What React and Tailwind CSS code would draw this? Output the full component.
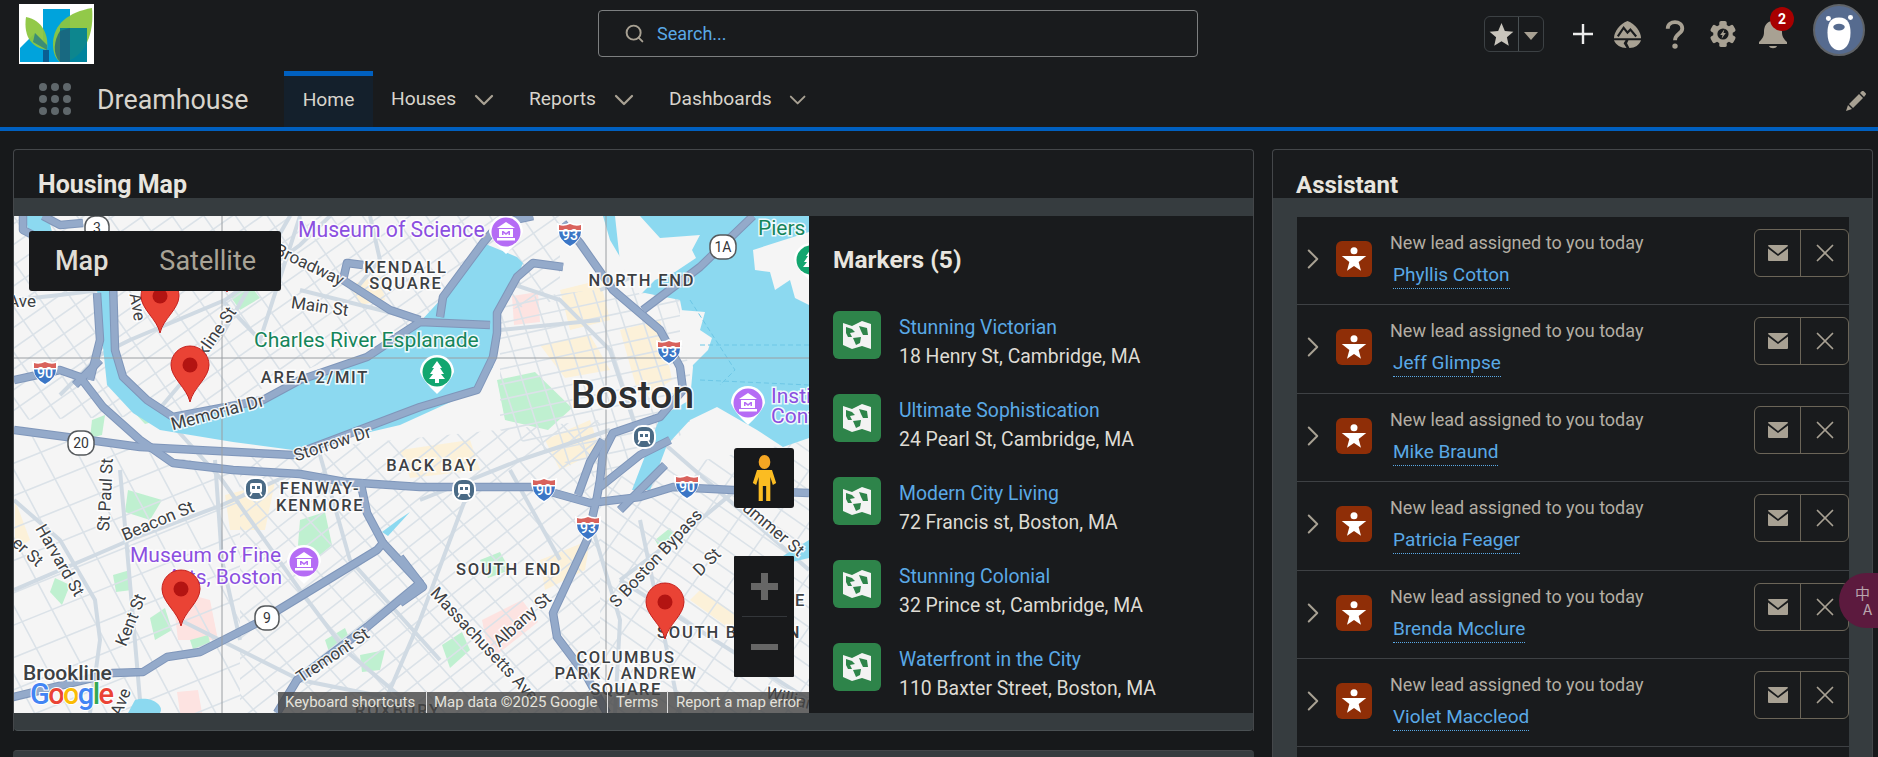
import { ChevronDown, ChevronRight, Search, X } from 'lucide-react'

const navItems = [
  { label: 'Houses', cls: 'w-[138px]' },
  { label: 'Reports', cls: 'w-[140px]' },
  { label: 'Dashboards', cls: 'w-[160px]' },
]

const markers = [
  { name: 'Stunning Victorian', address: '18 Henry St, Cambridge, MA' },
  { name: 'Ultimate Sophistication', address: '24 Pearl St, Cambridge, MA' },
  { name: 'Modern City Living', address: '72 Francis st, Boston, MA' },
  { name: 'Stunning Colonial', address: '32 Prince st, Cambridge, MA' },
  { name: 'Waterfront in the City', address: '110 Baxter Street, Boston, MA' },
]

const leads = ['Phyllis Cotton', 'Jeff Glimpse', 'Mike Braund', 'Patricia Feager', 'Brenda Mcclure', 'Violet Maccleod']

// ---- map data, in page pixels (the svg viewBox is offset to match) ----
const water = [
  'M25 216 L48 216 L52 232 L30 238 Z',
  'M97 290 L113 290 L115 350 L123 377 L147 400 L173 417 L263 400 L300 380 L367 357 L420 322 L443 297 L483 243 L517 257 L523 263 L517 277 L497 313 L497 333 L493 367 L477 390 L400 425 L293 450 L233 442 L160 430 L133 413 L107 385 Z',
  'M603 216 L809 216 L809 438 L783 447 L757 430 L717 407 L690 420 L667 445 L650 490 L632 490 L660 417 L690 400 L693 367 L680 300 L640 292 L623 262 L610 240 Z',
  'M783 556 L809 540 L809 558 L792 562 Z',
  'M135 700 C150 695 165 705 160 713 L128 713 Z',
  'M398 520 L410 512 L388 536 L382 532 Z',
]
const land = [
  'M615 216 L640 216 L660 238 L700 235 L692 250 L696 258 L675 272 L655 280 L640 295 L620 262 Z',
  'M753 250 L809 232 L809 305 L795 298 L790 280 L775 290 L770 272 L755 270 Z',
  'M680 310 L705 312 L700 330 L712 338 L708 350 L690 368 L680 340 Z',
]
const parks = [
  'M497 380 L535 372 L572 408 L548 430 L505 420 Z',
  'M110 372 L128 392 L160 420 L145 424 L118 395 Z',
  'M300 520 L325 512 L332 545 L312 562 L298 545 Z',
  'M230 296 L250 285 L260 298 L240 310 Z',
  'M92 420 L105 415 L102 435 L90 438 Z',
  'M385 408 L415 395 L420 405 L390 420 Z',
  'M128 490 L162 500 L150 520 L125 512 Z',
  'M113 575 L130 570 L132 590 L116 592 Z',
  'M150 618 L165 608 L172 630 L155 640 Z',
  'M55 578 L70 585 L62 605 L50 592 Z',
  'M190 640 L208 635 L212 650 L195 655 Z',
  'M480 560 L500 552 L510 570 L488 578 Z',
  'M442 645 L462 632 L470 650 L450 668 Z',
  'M655 540 L670 528 L678 540 L662 552 Z',
  'M325 640 L345 628 L350 640 L330 655 Z',
  'M360 655 L385 650 L380 670 L362 672 Z',
]
const pinks = [
  'M512 296 L538 292 L540 322 L514 325 Z',
  'M172 590 L210 600 L218 640 L178 640 Z',
  'M482 620 L522 600 L538 622 L490 660 Z',
  'M177 692 L198 690 L202 713 L180 713 Z',
]
const pales = [
  'M560 290 L600 280 L610 320 L570 330 Z',
  'M620 330 L660 320 L672 380 L640 400 Z',
  'M540 345 L590 335 L610 370 L565 378 Z',
  'M545 440 L590 420 L600 450 L560 470 Z',
  'M400 450 L470 440 L480 470 L410 478 Z',
  'M225 495 L275 482 L265 530 L230 530 Z',
  'M700 590 L790 650 L780 665 L690 600 Z',
  'M540 560 L590 540 L585 570 L545 590 Z',
  'M350 285 L380 275 L385 300 L360 305 Z',
  'M15 500 L30 540 L15 550 Z',
]
const meshes = [
  { id: 'm1', pts: '14,216 560,216 560,300 400,330 200,415 14,420', angle: -35, step: 17 },
  { id: 'm2', pts: '14,216 560,216 560,300 400,330 200,415 14,420', angle: 55, step: 26 },
  { id: 'm3', pts: '14,425 240,470 240,713 14,713', angle: -22, step: 30 },
  { id: 'm4', pts: '14,425 240,470 240,713 14,713', angle: 62, step: 32 },
  { id: 'm5', pts: '240,455 600,420 600,713 240,713', angle: -38, step: 16 },
  { id: 'm6', pts: '240,455 600,420 600,713 240,713', angle: 48, step: 28 },
  { id: 'm7', pts: '500,300 690,280 690,430 600,480 500,430', angle: -12, step: 15 },
  { id: 'm8', pts: '500,300 690,280 690,430 600,480 500,430', angle: 72, step: 19 },
  { id: 'm9', pts: '600,480 809,440 809,713 600,713', angle: 35, step: 16 },
  { id: 'm10', pts: '600,480 809,440 809,713 600,713', angle: -55, step: 30 },
]
const streets = [
  'M14 300 L60 295 L100 290 L225 250',
  'M60 395 L100 355 L130 340 L225 300 L300 245 L330 216',
  'M150 420 L222 335 L290 216',
  'M222 300 L260 340 L300 216',
  'M300 290 L340 300 L420 320',
  'M370 216 L380 260 L355 290',
  'M14 590 L130 540 L222 505 L300 470',
  'M14 500 L60 540 L95 600 L100 640 L90 713',
  'M150 400 L222 480 L300 590 L345 650 L420 713',
  'M180 620 L300 680 L400 700',
  'M215 460 L222 560 L240 640',
  'M120 470 L128 560 L140 700',
  'M500 280 L560 300 L610 350 L640 440',
  'M420 500 L520 460 L610 430',
  'M465 500 L420 620 L380 713',
  'M510 470 L560 560',
  'M500 330 L600 320',
  'M497 260 L520 285',
  'M590 520 L620 620 L615 713',
  'M640 520 L680 713',
  'M620 580 L700 520 L760 470',
  'M660 440 L809 570',
  'M620 580 L809 700',
  'M310 420 L350 560 L440 660',
  'M600 290 L700 250',
]
const highways = [
  'M113 283 L115 350 L123 377 L147 400 L173 417 L263 400 L300 380 L367 357 L400 335 L420 322 L490 325',
  'M97 293 L100 340 L90 380',
  'M14 380 L60 370 L80 377 L103 407 L140 440 L173 463 L233 470 L300 474 L345 482 L420 487 L533 487 L590 503 L640 497 L673 487 L733 490 L809 493',
  'M14 430 L67 437 L140 447 L293 455 L420 407 L477 390 L493 357 L497 333 L497 313 L517 277 L533 263 L563 267',
  'M563 223 L580 243 L613 290 L660 330 L680 367 L683 390 L660 417 L613 433 L603 453 L600 480 L597 497 L587 540 L553 613 L557 637 L587 677 L607 713',
  'M753 216 L700 267 L643 310',
  'M343 280 L347 263 L363 265',
  'M343 280 L390 310 L420 320',
  'M440 317 L443 297 L483 243 L500 223 L533 216',
  'M13 697 L113 673 L143 672 L167 657 L200 652 L257 623 L377 550 L383 543 L367 513 L360 480',
  'M383 543 L420 583 L367 627 L297 680 L277 713',
  'M400 557 L423 587 L400 603',
  'M23 216 L23 230 L37 237',
  'M43 216 L60 225 L83 223',
  'M100 360 L75 385',
  'M600 487 L640 455 L670 440',
  'M578 495 L590 462 L603 440',
  'M620 510 L650 480 L665 465',
]
const labels = [
  { x: 298, y: 237, t: 'Museum of Science', size: 21.2, fill: '#8b4fe0' },
  { x: 254, y: 347, t: 'Charles River Esplanade', size: 21, fill: '#15855a' },
  { x: 406, y: 273, t: 'KENDALL', size: 16.5, fill: '#3c4043', anchor: 'middle', w: 500, ls: 1.8 },
  { x: 406, y: 289, t: 'SQUARE', size: 16.5, fill: '#3c4043', anchor: 'middle', w: 500, ls: 1.8 },
  { x: 319, y: 312, t: 'Main St', size: 17, fill: '#3c4043', anchor: 'middle', r: 8 },
  { x: 307, y: 270, t: 'Broadway', size: 17, fill: '#3c4043', anchor: 'middle', r: 26 },
  { x: 22, y: 307, t: 'Ave', size: 17, fill: '#3c4043', anchor: 'middle' },
  { x: 132, y: 308, t: 'Ave', size: 17, fill: '#3c4043', anchor: 'middle', r: 80 },
  { x: 237, y: 312, t: 'Brookline St', size: 17, fill: '#3c4043', anchor: 'end', r: -55 },
  { x: 315, y: 383, t: 'AREA 2/MIT', size: 16.5, fill: '#3c4043', anchor: 'middle', w: 500, ls: 1.8 },
  { x: 219, y: 418, t: 'Memorial Dr', size: 17.5, fill: '#3c4043', anchor: 'middle', r: -15 },
  { x: 334, y: 449, t: 'Storrow Dr', size: 17, fill: '#3c4043', anchor: 'middle', r: -18 },
  { x: 432, y: 471, t: 'BACK BAY', size: 16.5, fill: '#3c4043', anchor: 'middle', w: 500, ls: 1.8 },
  { x: 642, y: 286, t: 'NORTH END', size: 16.5, fill: '#3c4043', anchor: 'middle', w: 500, ls: 1.8 },
  { x: 571, y: 408, t: 'Boston', size: 39, fill: '#2d2f31', w: 500 },
  { x: 758, y: 235, t: 'Piers', size: 21, fill: '#15855a' },
  { x: 771, y: 403, t: 'Institute', size: 21, fill: '#8b4fe0' },
  { x: 771, y: 423, t: 'Contemporary', size: 21, fill: '#8b4fe0' },
  { x: 320, y: 494, t: 'FENWAY-', size: 16.5, fill: '#3c4043', anchor: 'middle', w: 500, ls: 1.6 },
  { x: 320, y: 511, t: 'KENMORE', size: 16.5, fill: '#3c4043', anchor: 'middle', w: 500, ls: 1.6 },
  { x: 160, y: 526, t: 'Beacon St', size: 17, fill: '#3c4043', anchor: 'middle', r: -23 },
  { x: 55, y: 563, t: 'Harvard St', size: 17, fill: '#3c4043', anchor: 'middle', r: 60 },
  { x: 111, y: 495, t: 'St Paul St', size: 17, fill: '#3c4043', anchor: 'middle', r: -87 },
  { x: 24, y: 556, t: 'er St', size: 17, fill: '#3c4043', anchor: 'middle', r: 42 },
  { x: 136, y: 622, t: 'Kent St', size: 17, fill: '#3c4043', anchor: 'middle', r: -68 },
  { x: 130, y: 562, t: 'Museum of Fine', size: 21, fill: '#8b4fe0' },
  { x: 282, y: 584, t: 'Arts, Boston', size: 21, fill: '#8b4fe0', anchor: 'end' },
  { x: 23, y: 680, t: 'Brookline', size: 21, fill: '#3c4043', w: 500 },
  { x: 126, y: 704, t: 'Ave', size: 17, fill: '#3c4043', anchor: 'middle', r: -68 },
  { x: 336, y: 660, t: 'Tremont St', size: 17, fill: '#3c4043', anchor: 'middle', r: -34 },
  { x: 480, y: 648, t: 'Massachusetts Ave', size: 17, fill: '#3c4043', anchor: 'middle', r: 47 },
  { x: 509, y: 575, t: 'SOUTH END', size: 16.5, fill: '#3c4043', anchor: 'middle', w: 500, ls: 1.8 },
  { x: 526, y: 624, t: 'Albany St', size: 17, fill: '#3c4043', anchor: 'middle', r: -42 },
  { x: 626, y: 663, t: 'COLUMBUS', size: 16.5, fill: '#3c4043', anchor: 'middle', w: 500, ls: 1.5 },
  { x: 626, y: 679, t: 'PARK / ANDREW', size: 16.5, fill: '#3c4043', anchor: 'middle', w: 500, ls: 1.5 },
  { x: 626, y: 695, t: 'SQUARE', size: 16.5, fill: '#3c4043', anchor: 'middle', w: 500, ls: 1.5 },
  { x: 660, y: 562, t: 'S Boston Bypass', size: 17, fill: '#3c4043', anchor: 'middle', r: -47 },
  { x: 711, y: 566, t: 'D St', size: 17, fill: '#3c4043', anchor: 'middle', r: -45 },
  { x: 657, y: 638, t: 'SOUTH BOSTON', size: 16.5, fill: '#3c4043', w: 500, ls: 1.8 },
  { x: 795, y: 606, t: 'E', size: 16.5, fill: '#3c4043', w: 500 },
  { x: 766, y: 530, t: 'Summer St', size: 17, fill: '#3c4043', anchor: 'middle', r: 40 },
  { x: 765, y: 698, t: 'Williams', size: 17, fill: '#3c4043', r: 14 },
  { x: 355, y: 716, t: 'ROXBURY', size: 16.5, fill: '#3c4043', w: 500, ls: 1.8 },
]
const interstates = [
  { x: 45, y: 373, n: '90' }, { x: 544, y: 490, n: '90' }, { x: 687, y: 487, n: '90' },
  { x: 570, y: 235, n: '93' }, { x: 669, y: 352, n: '93' }, { x: 588, y: 528, n: '93' },
]
const roundShields = [
  { x: 97, y: 228, n: '3', w: 24 }, { x: 81, y: 443, n: '20', w: 26 },
  { x: 723, y: 247, n: '1A', w: 26 }, { x: 267, y: 618, n: '9', w: 24 },
]
const redPins = [[227, 292], [160, 333], [190, 402], [181, 626], [665, 639]]

function meshLines(angle, step) {
  const out = []
  for (let i = -70; i <= 70; i++) out.push(`M-1400 ${i * step} L1400 ${i * step}`)
  return { d: out.join(' '), transform: `translate(410 465) rotate(${angle})` }
}

function Label({ x, y, t, size, fill, anchor = 'start', w = 400, r = 0, ls = 0 }) {
  return (
    <text
      x={x}
      y={y}
      fontSize={size}
      fill={fill}
      fontWeight={w}
      textAnchor={anchor}
      letterSpacing={ls}
      transform={r ? `rotate(${r} ${x} ${y})` : undefined}
      stroke="#ffffff"
      strokeWidth="3"
      strokeOpacity="0.85"
      className="[paint-order:stroke]"
    >
      {t}
    </text>
  )
}

function Interstate({ x, y, n }) {
  return (
    <g transform={`translate(${x} ${y})`}>
      <path d="M-13 -12 Q-6 -9 0 -13 Q6 -9 13 -12 Q14 4 0 13 Q-14 4 -13 -12 Z" fill="#ffffff" />
      <path d="M-11 -10 Q-6 -8 0 -11 Q6 -8 11 -10 L11 -5 L-11 -5 Z" fill="#d9625c" />
      <path d="M-11 -3.5 L11 -3.5 Q11 5 0 11 Q-11 5 -11 -3.5 Z" fill="#3b76c6" />
      <text y="5" fontSize="14" fontWeight="500" fill="#ffffff" textAnchor="middle">{n}</text>
    </g>
  )
}

function RoundShield({ x, y, n, w }) {
  return (
    <g transform={`translate(${x} ${y})`}>
      <rect x={-w / 2} y={-12} width={w} height={24} rx="10" fill="#ffffff" stroke="#55595c" strokeWidth="1.5" />
      <text y="5" fontSize="14" fill="#33363a" textAnchor="middle">{n}</text>
    </g>
  )
}

function Transit({ x, y }) {
  return (
    <g transform={`translate(${x} ${y})`}>
      <rect x="-11" y="-11" width="22" height="22" rx="9" fill="#4a6a85" stroke="#ffffff" strokeWidth="2" />
      <rect x="-6" y="-6" width="12" height="10" rx="2" fill="#ffffff" />
      <rect x="-4" y="-3" width="3" height="3" fill="#4a6a85" />
      <rect x="1" y="-3" width="3" height="3" fill="#4a6a85" />
      <path d="M-4 4 L-6 7 M4 4 L6 7" stroke="#ffffff" strokeWidth="1.5" />
    </g>
  )
}

function PoiPin({ x, y, color, tree }) {
  return (
    <g transform={`translate(${x} ${y})`}>
      <path d="M-17 0 A17 17 0 1 1 17 0 Q14 9 0 22 Q-14 9 -17 0 Z" fill="#ffffff" />
      <circle r="14.5" fill={color} />
      {tree ? (
        <path d="M0 -11 L5 -4 L3 -4 L7 2 L4 2 L8 7 L2 7 L2 11 L-2 11 L-2 7 L-8 7 L-4 2 L-7 2 L-3 -4 L-5 -4 Z" fill="#ffffff" />
      ) : (
        <g fill="#ffffff">
          <path d="M-9 -4 L0 -10 L9 -4 Z" />
          <rect x="-9" y="6" width="18" height="2.5" />
          <path d="M-7 -3 H7 V5 H-7 Z M-4 -1 V3 H-2.5 V1 L0 3 L2.5 1 V3 H4 V-1 H2.5 L0 1 L-2.5 -1 Z" fillRule="evenodd" />
        </g>
      )}
    </g>
  )
}

function RedPin({ x, y }) {
  return (
    <g transform={`translate(${x} ${y})`}>
      <path d="M0 0 C-3 -14 -19 -24 -19 -37 A19 19 0 1 1 19 -37 C19 -24 3 -14 0 0 Z" fill="#ea4335" stroke="#c5221f" strokeWidth="1" />
      <circle cy="-37" r="7.5" fill="#b31412" />
    </g>
  )
}

function MapDrawing() {
  return (
    <svg viewBox="14 216 795 497" className="absolute inset-0 h-full w-full font-[Roboto,sans-serif]">
      <defs>
        {meshes.map((m) => (
          <clipPath key={m.id} id={m.id}>
            <polygon points={m.pts} />
          </clipPath>
        ))}
      </defs>
      <rect x="14" y="216" width="795" height="497" fill="#f5f5f5" />
      {pales.map((d) => <path key={d} d={d} fill="#fcf1d9" />)}
      {pinks.map((d) => <path key={d} d={d} fill="#fde3e1" />)}
      {parks.map((d) => <path key={d} d={d} fill="#bff0d0" />)}
      {meshes.map((m) => {
        const l = meshLines(m.angle, m.step)
        return (
          <g key={m.id} clipPath={`url(#${m.id})`}>
            <path d={l.d} transform={l.transform} stroke="#dbe2e8" strokeWidth="1.6" fill="none" />
          </g>
        )
      })}
      {streets.map((d) => <path key={d} d={d} stroke="#d0dae3" strokeWidth="4" fill="none" />)}
      {water.map((d) => <path key={d} d={d} fill="#8cd9f0" />)}
      {land.map((d) => <path key={d} d={d} fill="#f5f5f5" />)}
      <path d="M690 300 L735 370 L720 385 M700 345 L809 345 M700 380 L809 385" stroke="#6dc7e6" strokeWidth="1" strokeDasharray="5 3" fill="none" />
      {highways.map((d) => <path key={d + 'o'} d={d} stroke="#7f96ba" strokeWidth="8.5" fill="none" strokeLinejoin="round" />)}
      {highways.map((d) => <path key={d} d={d} stroke="#94aaca" strokeWidth="6.5" fill="none" strokeLinejoin="round" />)}
      <path d="M222 216 V713 M606 216 V713 M14 358 H809" stroke="#9a9ea2" strokeWidth="1" fill="none" />
      {labels.map((l) => <Label key={l.t + l.x} {...l} />)}
      {interstates.map((s) => <Interstate key={`${s.x}`} {...s} />)}
      {roundShields.map((s) => <RoundShield key={`${s.x}`} {...s} />)}
      <Transit x={644} y={437} />
      <Transit x={256} y={489} />
      <Transit x={464} y={490} />
      <PoiPin x={506} y={232} color="#b56cf5" />
      <PoiPin x={748} y={403} color="#b56cf5" />
      <PoiPin x={304} y={562} color="#b56cf5" />
      <PoiPin x={437} y={372} color="#13a66f" tree />
      <PoiPin x={811} y={260} color="#13a66f" tree />
      {redPins.map(([x, y]) => <RedPin key={x} x={x} y={y} />)}
      <text x="30" y="704" fontSize="29" fontWeight="500" stroke="#ffffff" strokeWidth="2" className="[paint-order:stroke]" textLength="84">
        <tspan fill="#4285f4">G</tspan>
        <tspan fill="#ea4335">o</tspan>
        <tspan fill="#fbbc05">o</tspan>
        <tspan fill="#4285f4">g</tspan>
        <tspan fill="#34a853">l</tspan>
        <tspan fill="#ea4335">e</tspan>
      </text>
    </svg>
  )
}

function Logo() {
  return (
    <svg viewBox="0 0 75 60" className="h-[60px] w-[75px] bg-white">
      <rect x="24" y="5" width="27" height="53" fill="#00a3dc" />
      <path d="M1 58 V44 L16 29 L30 43 V58 Z" fill="#00a3dc" />
      <rect x="41" y="24" width="27" height="34" fill="#00a3dc" />
      <path d="M7 13 C24 16 30 32 28 46 C14 44 4 34 7 13 Z" fill="#8cc63f" opacity="0.95" />
      <path d="M73 4 C50 8 34 20 34 40 C34 50 37 55 41 58 C62 58 76 34 73 4 Z" fill="#8cc63f" opacity="0.95" />
      <path d="M41 24 H68 V58 H41 Z" fill="#007f96" opacity="0.9" />
      <path d="M41 27 C35 36 33 50 41 58 L51 58 V24 Z" fill="#1c5f7c" opacity="0.75" />
      <path d="M24 46 H30 V58 H24 Z" fill="#0a5e93" />
      <path d="M16 29 L28 41 L28 46 L14 38 Z" fill="#3c8d76" />
    </svg>
  )
}

function Star() {
  return (
    <svg viewBox="0 0 24 24" className="h-[25px] w-[25px]">
      <path d="M12 1 L15.2 8.6 L23.4 9.3 L17.2 14.7 L19 22.8 L12 18.5 L5 22.8 L6.8 14.7 L.6 9.3 L8.8 8.6 Z" fill="#c9c5bc" />
    </svg>
  )
}

function Trailhead() {
  return (
    <svg viewBox="0 0 30 30" className="h-[29px] w-[29px]">
      <path d="M15 1 C23 4 29 12 29 19 L1 19 C1 12 7 4 15 1 Z" fill="#a8a193" />
      <path d="M5 17 L11 8 L15 13 L18 10 L24 17" stroke="#191b1d" strokeWidth="2.2" fill="none" />
      <path d="M1 21 H13 L11 24 L14 29 C8 29 3 26 1 21 Z M29 21 H16 L14.5 24 L17 29 C23 29 27 26 29 21 Z" fill="#a8a193" />
    </svg>
  )
}

function Gear() {
  const teeth = [0, 60, 120, 180, 240, 300]
  return (
    <svg viewBox="-15 -15 30 30" className="h-[28px] w-[28px]">
      {teeth.map((a) => (
        <rect key={a} x="-4" y="-14" width="8" height="8" rx="2" fill="#a8a193" transform={`rotate(${a})`} />
      ))}
      <circle r="10.5" fill="#a8a193" />
      <circle r="6" fill="#191b1d" />
      <path d="M1.5 -5 L-3 1 L-0.5 1 L-1.5 5 L3 -1 L0.5 -1 Z" fill="#a8a193" />
    </svg>
  )
}

function Bell() {
  return (
    <svg viewBox="0 0 30 30" className="h-[30px] w-[30px]">
      <path d="M15 2 C8 2 6 8 6 13 C6 18 4 20 1 23 V25 H29 V23 C26 20 24 18 24 13 C24 8 22 2 15 2 Z" fill="#a8a193" />
      <path d="M11 27 H19 C18 30 12 30 11 27 Z" fill="#a8a193" />
    </svg>
  )
}

function Bear() {
  return (
    <svg viewBox="0 0 50 50" className="h-[52px] w-[52px] rounded-full border-2 border-[#5f6368] bg-[#566b8f]">
      <circle cx="14" cy="13" r="2.6" fill="#ffffff" />
      <circle cx="37" cy="12" r="2.6" fill="#ffffff" />
      <path d="M25 12 C15 12 13 20 13 28 C13 40 19 46 25 46 C31 46 37 40 37 28 C37 20 35 12 25 12 Z" fill="#ffffff" />
      <ellipse cx="25" cy="22" rx="6" ry="3.5" fill="#566b8f" />
    </svg>
  )
}

function MapIcon() {
  return (
    <span className="flex h-12 w-12 shrink-0 items-center justify-center rounded-md bg-[#2e844a]">
      <svg viewBox="0 0 30 30" className="h-[30px] w-[30px]">
        <path d="M1 3 L10 6 L20 1 L29 4 V29 L20 26 L10 29 L1 25 Z" fill="#f3f3f3" />
        <path d="M4 7 L10 9 L13 12 L8 13 L10 17 L6 17 L4 13 Z M17 6 L25 8 L26 15 L21 15 L19 11 Z M11 18 L19 17 L18 23 L14 25 Z" fill="#2e844a" />
      </svg>
    </span>
  )
}

function LeadIcon() {
  return (
    <span className="flex h-9 w-9 shrink-0 items-center justify-center rounded-md bg-[#8f2e07]">
      <svg viewBox="0 0 24 24" className="h-7 w-7">
        <circle cx="12" cy="5" r="3" fill="#ffffff" />
        <path d="M1.5 9.5 H22.5 L16 14.5 L18 22 L12 18 L6 22 L8 14.5 Z" fill="#ffffff" />
      </svg>
    </span>
  )
}

function MailIcon() {
  return (
    <svg viewBox="0 0 20 16" className="h-[16px] w-[20px]">
      <path d="M0 1 Q0 0 1 0 H19 Q20 0 20 1 L10 9 Z" fill="#a8a193" />
      <path d="M0 3.5 L10 11 L20 3.5 V15 Q20 16 19 16 H1 Q0 16 0 15 Z" fill="#a8a193" />
    </svg>
  )
}

function LeadRow({ name }) {
  return (
    <div className="flex h-[88.4px] shrink-0 border-b border-[#3e4144]">
      <div className="w-[39px] pt-[25px]">
        <ChevronRight className="-ml-px h-[34px] w-[34px] text-[#a8a193]" strokeWidth={1.4} />
      </div>
      <div className="pt-6">
        <LeadIcon />
      </div>
      <div className="ml-[18px] flex-1 pt-[14px]">
        <div className="text-[18px] leading-6 text-[#b3aea4]">New lead assigned to you today</div>
        <div className="ml-[3px] mt-[8px] w-fit border-b border-dotted border-[#5aa9e6] pb-[1px] text-[19px] leading-6 text-[#5aa9e6]">{name}</div>
      </div>
      <div className="mt-3 flex h-12 w-[95px] rounded-md border border-[#6b6558]">
        <div className="flex w-[46px] items-center justify-center border-r border-[#6b6558]">
          <MailIcon />
        </div>
        <div className="flex flex-1 items-center justify-center">
          <X className="h-[30px] w-[30px] text-[#a8a193]" strokeWidth={1.4} />
        </div>
      </div>
    </div>
  )
}

function MapPane() {
  return (
    <div className="relative h-[497px] w-[795px] shrink-0 overflow-hidden">
      <MapDrawing />
      <div className="absolute left-[15px] top-[15px] flex h-[60px] w-[252px] items-center rounded-[3px] bg-[#18191b] text-[27px]">
        <span className="ml-[26px] font-medium text-[#e0ddd6]">Map</span>
        <span className="ml-[51px] text-[#a8a396]">Satellite</span>
      </div>
      <div className="absolute left-[720px] top-[232px] flex h-[60px] w-[60px] items-center justify-center rounded-[3px] bg-[#18191b]">
        <svg viewBox="0 0 30 46" className="h-[46px] w-[25px]" preserveAspectRatio="none">
          <circle cx="15" cy="7" r="7" fill="#f5a623" />
          <path d="M6 15 H24 L29 28 L25 30 L22 22 L22 46 H17 V31 H13 V46 H8 L8 22 L5 30 L1 28 Z" fill="#fbbc22" />
        </svg>
      </div>
      <div className="absolute left-[720px] top-[340px] flex h-[121px] w-[60px] flex-col items-center rounded-[1px] bg-[#18191b]">
        <div className="flex h-[61px] w-[45px] items-center justify-center border-b border-[#33363a]">
          <svg viewBox="0 0 27 27" className="h-[27px] w-[27px]"><path d="M10 0 H17 V10 H27 V17 H17 V27 H10 V17 H0 V10 H10 Z" fill="#666666" /></svg>
        </div>
        <div className="flex flex-1 items-center justify-center">
          <span className="block h-[6px] w-[27px] bg-[#666666]" />
        </div>
      </div>
      <div className="absolute bottom-0 right-0 flex h-[21px] w-[531px] items-center bg-[#444444]/80 text-[15px] text-[#e4e2dc]">
        <span className="w-[148px] pl-[7px]">Keyboard shortcuts</span>
        <span className="w-[181px] border-l border-[#ddd] pl-[7px]">Map data ©2025 Google</span>
        <span className="w-[60px] border-l border-[#ddd] pl-[8px]">Terms</span>
        <span className="border-l border-[#ddd] pl-[8px]">Report a map error</span>
      </div>
    </div>
  )
}

export default function App() {
  return (
    <div className="relative h-[757px] w-[1878px] overflow-hidden bg-[#17191b] font-[Roboto,sans-serif]">
      {/* global header */}
      <header className="h-[131px] border-b-4 border-[#0060c0] bg-[#191b1d]">
        <div className="flex h-[70px]">
          <div className="ml-[19px] mt-1">
            <Logo />
          </div>
          <div className="ml-[504px] mt-[10px] flex h-[47px] w-[600px] items-center rounded border border-[#7d7f80] pl-[25px]">
            <Search className="h-[21px] w-[21px] text-[#a8a193]" strokeWidth={2.2} />
            <span className="ml-[12px] text-[18px] text-[#5aa9e6]">Search...</span>
          </div>
          <div className="ml-[286px] mt-4 flex h-9 w-[60px] rounded-md border border-[#3c4144]">
            <div className="flex w-[34px] items-center justify-center border-r border-[#4a5154]">
              <Star />
            </div>
            <div className="flex flex-1 items-center justify-center">
              <span className="mt-[3px] h-0 w-0 border-x-[7px] border-t-[8px] border-x-transparent border-t-[#a8a193]" />
            </div>
          </div>
          <div className="ml-6 mt-[19px] flex h-[30px] w-[30px] items-center justify-center rounded-md">
            <svg viewBox="0 0 20 20" className="h-5 w-5"><path d="M10 0 V20 M0 10 H20" stroke="#ececec" strokeWidth="2.4" /></svg>
          </div>
          <div className="ml-[15px] mt-5">
            <Trailhead />
          </div>
          <div className="ml-[23px] mt-5">
            <svg viewBox="0 0 20 30" className="h-[29px] w-5">
              <path d="M2.5 9 C2.5 0 17.5 0 17.5 9 C17.5 14 10 14 10 21" stroke="#a8a193" strokeWidth="4" fill="none" />
              <circle cx="10" cy="27" r="2.8" fill="#a8a193" />
            </svg>
          </div>
          <div className="ml-[24px] mt-5">
            <Gear />
          </div>
          <div className="relative ml-[21px] mt-[19px]">
            <Bell />
            <span className="absolute left-[12px] top-[-12px] flex h-6 w-6 items-center justify-center rounded-full bg-[#a80000] text-[14px] font-bold text-white">2</span>
          </div>
          <div className="ml-[25px] mt-1">
            <Bear />
          </div>
        </div>
        <nav className="flex h-[57px]">
          <div className="ml-[39px] mt-[13px] grid h-8 w-8 grid-cols-3 gap-x-1 gap-y-1">
            {Array.from({ length: 9 }).map((_, i) => (
              <span key={i} className="h-2 w-2 rounded-full bg-[#5f676b]" />
            ))}
          </div>
          <span className="ml-[26px] mt-[12px] w-[150px] text-[26.8px] leading-9 text-[#d8d4cc]">Dreamhouse</span>
          <div className="ml-[37px] mt-px flex h-[56px] w-[89px] items-center justify-center border-t-[5px] border-[#0060c0] bg-[#14202c] pb-[3px] text-[19.2px] text-[#d8d4cc]">Home</div>
          {navItems.map((n) => (
            <div key={n.label} className={`${n.cls} flex items-center pl-[18px] pt-[2px] text-[19.2px] text-[#d8d4cc]`}>
              {n.label}
              <ChevronDown className="ml-[12px] h-[32px] w-[32px] text-[#a8a193]" strokeWidth={1.7} />
            </div>
          ))}
          <div className="ml-auto mr-[12px] mt-[21px]">
            <svg viewBox="0 0 20 20" className="h-5 w-5">
              <path d="M0 20 L2 14 L6 18 Z M3 13 L13 3 L17 7 L7 17 Z M14 2 L16 0 Q17 -0.5 18 0.5 L19.5 2 Q20.5 3 19.5 4 L18 6 Z" fill="#a8a193" />
            </svg>
          </div>
        </nav>
      </header>

      <main className="flex pl-[13px] pt-[18px]">
        <div className="w-[1241px] shrink-0">
          <section className="rounded-t border-x border-t border-[#44474a] bg-[#191b1d]">
            <h2 className="h-[48px] pl-[24px] pt-5 text-[25px] font-bold leading-[30px] text-[#e8e5df]">Housing Map</h2>
            <div className="h-[18px] bg-[#363c3f]" />
            <div className="flex">
              <MapPane />
              <div className="flex-1 pl-[24px] pt-[30px]">
                <h3 className="text-[24.5px] font-bold leading-7 text-[#e8e5df]">Markers (5)</h3>
                <ul className="mt-[37px] flex flex-col gap-[35px]">
                  {markers.map((m) => (
                    <li key={m.name} className="flex h-12 items-center">
                      <MapIcon />
                      <div className="ml-[18px] mt-[13px]">
                        <div className="text-[19.4px] leading-[29px] text-[#5aa9e6]">{m.name}</div>
                        <div className="text-[19.4px] leading-[29px] text-[#dedbd4]">{m.address}</div>
                      </div>
                    </li>
                  ))}
                </ul>
              </div>
            </div>
            <div className="h-[18px] rounded-b border-b border-[#4a5053] bg-[#363c3f]" />
          </section>
          <section className="mt-[19px] h-[60px] rounded-t border-t border-[#44474a] bg-[#363c3f]" />
        </div>
        <section className="ml-[18px] w-[601px] shrink-0 rounded-t border-x border-t border-[#44474a] bg-[#191b1d]">
          <h2 className="h-[48px] pl-[23px] pt-5 text-[24px] font-bold leading-[30px] text-[#e8e5df]">Assistant</h2>
          <div className="h-[600px] bg-[#363c3f] px-6 pt-[19px]">
            <div className="flex h-[600px] w-[552px] flex-col bg-[#191b1d]">
              {leads.map((name) => (
                <LeadRow key={name} name={name} />
              ))}
            </div>
          </div>
        </section>
      </main>

      {/* translate widget floating over the page */}
      <div className="absolute right-0 top-[573px] flex h-[55px] w-[39px] flex-col justify-center overflow-hidden rounded-l-[28px] bg-[#5c1a3e] pl-[16px] font-['Noto_Sans_CJK_SC',sans-serif] text-[15px] leading-[16px] text-[#b9a5ad]">
        <span className="block w-[40px]">中</span>
        <span className="ml-[8px] block w-[30px]">A</span>
      </div>
    </div>
  )
}
